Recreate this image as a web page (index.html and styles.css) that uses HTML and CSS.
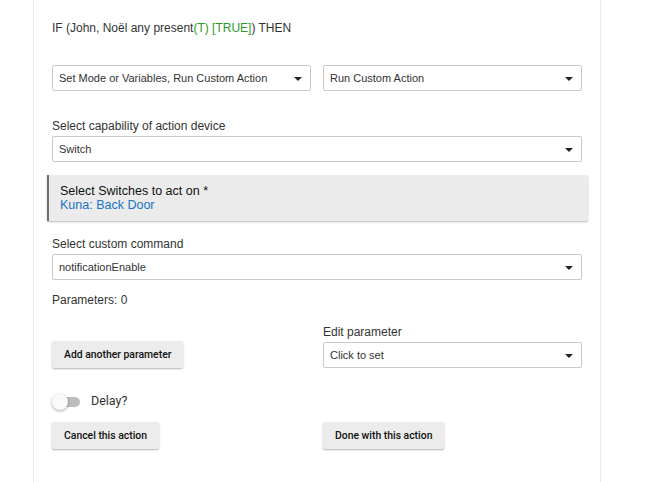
FILE: index.html
```html
<!DOCTYPE html>
<html>
<head>
<meta charset="utf-8">
<link rel="stylesheet" href="styles.css">
</head>
<body>
<div class="card">
  <div class="heading">IF (John, Noël any present<span class="ok">(T) [TRUE]</span>) THEN</div>

  <div class="row2 first-row">
    <div class="select"><span>Set Mode or Variables, Run Custom Action</span><i class="caret"></i></div>
    <div class="select"><span>Run Custom Action</span><i class="caret"></i></div>
  </div>

  <div class="field cap">
    <div class="label">Select capability of action device</div>
    <div class="select"><span>Switch</span><i class="caret"></i></div>
  </div>

  <div class="devbox">
    <div class="devtitle">Select Switches to act on *</div>
    <div class="devval">Kuna: Back Door</div>
  </div>

  <div class="field cmd">
    <div class="label">Select custom command</div>
    <div class="select"><span>notificationEnable</span><i class="caret"></i></div>
  </div>

  <div class="params">Parameters: 0</div>

  <div class="row2 param-row">
    <div class="col-btn"><button class="btn">Add another parameter</button></div>
    <div class="field">
      <div class="label">Edit parameter</div>
      <div class="select"><span>Click to set</span><i class="caret"></i></div>
    </div>
  </div>

  <div class="toggle-row">
    <span class="switch"><span class="track"></span><span class="knob"></span></span>
    <span class="toggle-label">Delay?</span>
  </div>

  <div class="row2 actions">
    <div><button class="btn">Cancel this action</button></div>
    <div><button class="btn">Done with this action</button></div>
  </div>
</div>
</body>
</html>
```

FILE: styles.css
```css
html, body {
  margin: 0;
  padding: 0;
  background: #ffffff;
  height: 100%;
}
body {
  font-family: "Liberation Sans", Arial, sans-serif;
  color: #333333;
  overflow: hidden;
}
.card {
  margin-left: 33px;
  width: 568px;
  min-height: 482px;
  box-sizing: border-box;
  border-left: 1px solid #ececec;
  border-right: 1px solid #ececec;
  padding: 20px 18px 0 18px;
}
.heading {
  font-size: 12px;
  line-height: 16px;
  color: #333;
}
.ok { color: #2b9a2b; }
.row2 {
  display: grid;
  grid-template-columns: 259px 259px;
  column-gap: 12px;
}
.first-row { margin-top: 29px; }
.select {
  height: 26px;
  box-sizing: border-box;
  border: 1px solid #c9c9c9;
  border-radius: 2px;
  display: flex;
  align-items: center;
  justify-content: space-between;
  padding: 0 8px 0 6px;
  font-size: 11px;
  color: #333;
  background: #fff;
}
.caret {
  width: 0;
  height: 0;
  border-left: 4px solid transparent;
  border-right: 4px solid transparent;
  border-top: 4px solid #222;
  margin-top: 1px;
}
.label {
  font-size: 12px;
  line-height: 16px;
  margin-bottom: 2px;
  color: #333;
}
.field.cap { margin-top: 27px; }
.devbox {
  margin: 13px -6px 0 -5px;
  background: #ebebeb;
  border-left: 2px solid #6f6f6f;
  box-shadow: 0 1px 2px rgba(0,0,0,0.28);
  padding: 8px 10px 8px 11px;
  border-radius: 0 2px 2px 0;
}
.devtitle {
  font-size: 12.5px;
  line-height: 15px;
  color: #111;
  padding-top: 1px;
  margin-bottom: -1px;
}
.devval {
  font-size: 12.5px;
  line-height: 15px;
  color: #1a73c8;
}
.field.cmd { margin-top: 15px; }
.params {
  margin-top: 12px;
  font-size: 12px;
  line-height: 16px;
  color: #333;
}
.param-row { margin-top: 16px; align-items: end; }
.col-btn { display: flex; align-items: flex-end; }
.btn {
  font-family: Roboto, "Liberation Sans", sans-serif;
  font-weight: 500;
  font-size: 10.4px;
  color: #111;
  background: #ececec;
  border: none;
  border-radius: 2px;
  box-shadow: 0 1px 2px rgba(0,0,0,0.3);
  height: 27px;
  padding: 0 12px;
}
.toggle-row {
  margin-top: 23px;
  height: 20px;
  display: flex;
  align-items: center;
}
.switch {
  position: relative;
  width: 28px;
  height: 20px;
  display: inline-block;
}
.track {
  position: absolute;
  left: 4px;
  top: 6px;
  width: 24px;
  height: 10px;
  border-radius: 5px;
  background: #bdbdbd;
}
.knob {
  position: absolute;
  left: 0;
  top: 3px;
  width: 16px;
  height: 16px;
  border-radius: 50%;
  background: #fafafa;
  box-shadow: 0 1px 3px rgba(0,0,0,0.35);
}
.toggle-label {
  margin-left: 11px;
  font-family: Roboto, "Liberation Sans", sans-serif;
  font-size: 12.5px;
  color: #333;
  margin-top: -2px;
}
.actions { margin-top: 11px; }
```
